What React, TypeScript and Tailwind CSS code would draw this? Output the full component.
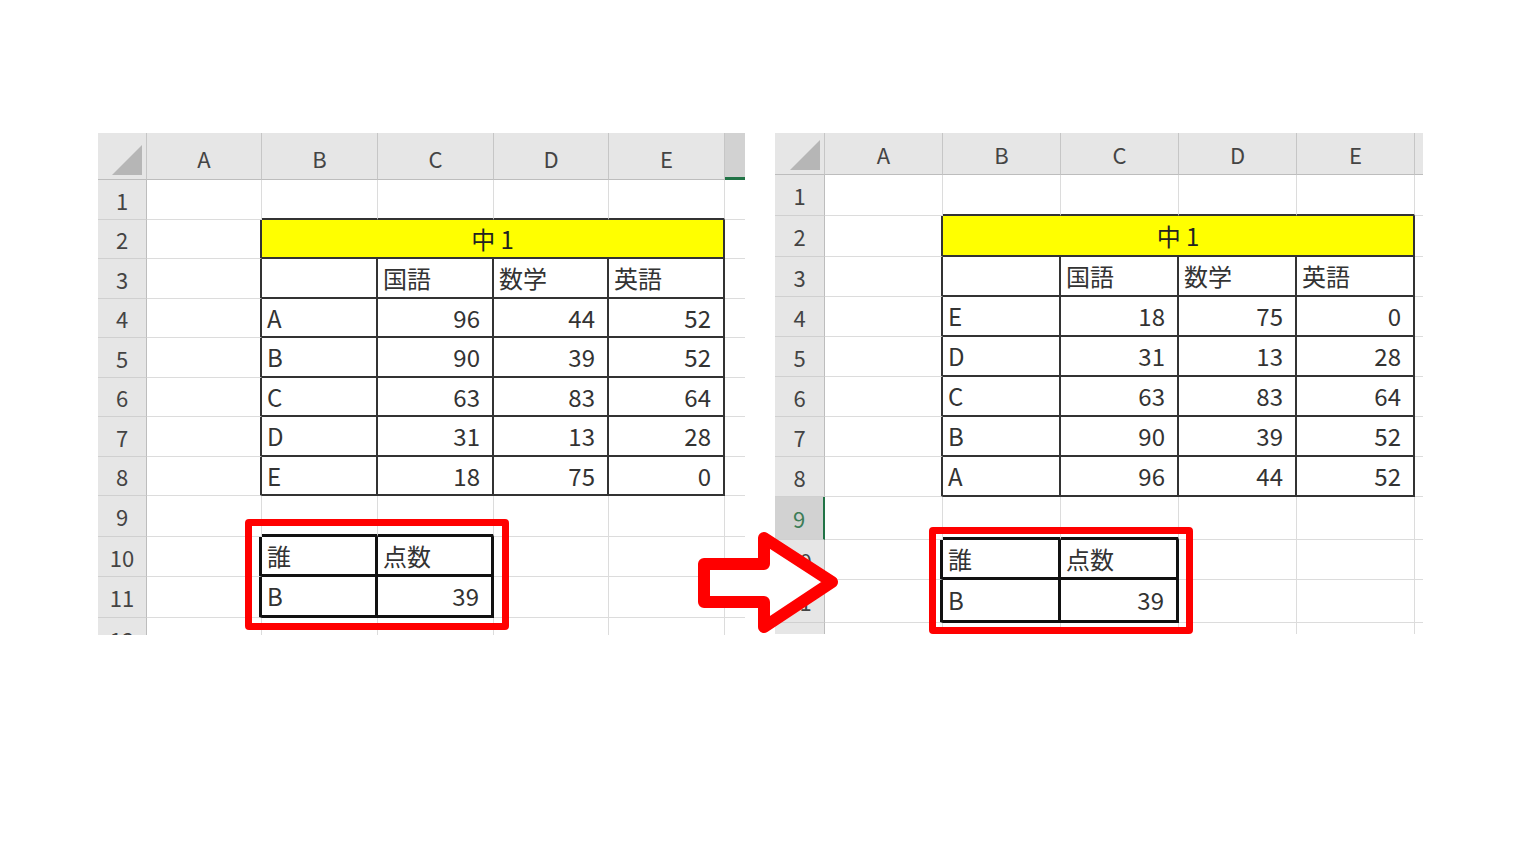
type ScoreRow = [string, number, number, number];

const COLS = ["A", "B", "C", "D", "E"];

const inMain = (r: number, c: number) => r >= 2 && r <= 8 && c >= 2 && c <= 5;
const inSmall = (r: number, c: number) => r >= 10 && r <= 11 && c >= 2 && c <= 3;

// each cell paints its own right/bottom edge, the way excel's grid does
function rightEdge(r: number, c: number): string {
  if ((inSmall(r, c) && c === 3) || inSmall(r, c + 1)) return "border-r-[3px] border-r-[#111]";
  if (inSmall(r, c)) return "border-r-2 border-r-[#333]";
  if (inMain(r, c) || inMain(r, c + 1)) return "border-r-2 border-r-[#333]";
  if (c === 6) return "";
  return "border-r border-r-[#dcdcdc]";
}

function bottomEdge(r: number, c: number): string {
  if ((inSmall(r, c) && r === 11) || inSmall(r + 1, c)) return "border-b-[3px] border-b-[#111]";
  if (inSmall(r, c)) return "border-b-2 border-b-[#333]";
  if (inMain(r, c) || inMain(r + 1, c)) return "border-b-2 border-b-[#333]";
  if (r === 12) return "";
  return "border-b border-b-[#dcdcdc]";
}

function cellText(r: number, c: number, scores: ScoreRow[]): { text: string; num: boolean } {
  if (r === 3) return { text: ["", "", "", "国語", "数学", "英語"][c] ?? "", num: false };
  if (r >= 4 && r <= 8 && c >= 2 && c <= 5) {
    const row = scores[r - 4];
    return c === 2 ? { text: row[0], num: false } : { text: String(row[c - 2]), num: true };
  }
  if (r === 10 && c === 2) return { text: "誰", num: false };
  if (r === 10 && c === 3) return { text: "点数", num: false };
  if (r === 11 && c === 2) return { text: "B", num: false };
  if (r === 11 && c === 3) return { text: "39", num: true };
  return { text: "", num: false };
}

function Sheet({
  gridClass,
  headPad,
  scores,
  selRow,
  selColF,
}: {
  gridClass: string;
  headPad: string;
  scores: ScoreRow[];
  selRow?: number;
  selColF?: boolean;
}) {
  const rows = Array.from({ length: 12 }, (_, i) => i + 1);

  return (
    <div className={`${gridClass} bg-white overflow-hidden leading-none text-[#333]`}>
      {/* column headers */}
      <div className="flex items-end justify-end pr-[4px] pb-[4px] bg-[#e6e6e6] border-r border-r-[#c6c6c6] border-b border-b-[#bdbdbd]">
        <svg width="30" height="30" viewBox="0 0 30 30">
          <path d="M30 0 L30 30 L0 30 Z" fill="#b6b6b6" />
        </svg>
      </div>
      {COLS.map((l) => (
        <div
          key={l}
          className={`flex items-center justify-center ${headPad} text-[22px] bg-[#e6e6e6] text-[#444] border-r border-r-[#c6c6c6] border-b border-b-[#bdbdbd]`}
        >
          {l}
        </div>
      ))}
      <div
        className={
          selColF
            ? "bg-[#d2d2d2] border-b-[3px] border-b-[#217346]"
            : "bg-[#e6e6e6] border-b border-b-[#bdbdbd]"
        }
      />

      {rows.map((r) => {
        const sel = r === selRow;
        const cells = [];
        cells.push(
          <div
            key={`h${r}`}
            className={`flex justify-center overflow-hidden text-[22px] ${r === 12 ? "items-start pt-[10px]" : "items-center"} ${
              sel
                ? "bg-[#d2d2d2] text-[#3d7d57] border-r-2 border-r-[#217346]"
                : "bg-[#e6e6e6] text-[#444] border-r border-r-[#bdbdbd]"
            } ${r === 12 ? "" : "border-b border-b-[#d0d0d0]"}`}
          >
            {r}
          </div>
        );
        for (let c = 1; c <= 6; c++) {
          if (r === 2 && c === 2) {
            cells.push(
              <div
                key={`${r}-${c}`}
                className={`col-span-4 flex items-center justify-center text-[24px] bg-[#ffff00] text-[#222] ${rightEdge(r, 5)} ${bottomEdge(r, 5)}`}
              >
                中 1
              </div>
            );
            continue;
          }
          if (r === 2 && c >= 3 && c <= 5) continue;
          const { text, num } = cellText(r, c, scores);
          cells.push(
            <div
              key={`${r}-${c}`}
              className={`flex items-center text-[24px] ${num ? "justify-end pr-[12px]" : "justify-start pl-[5px]"} ${rightEdge(r, c)} ${bottomEdge(r, c)}`}
            >
              {text}
            </div>
          );
        }
        return cells;
      })}
    </div>
  );
}

const before: ScoreRow[] = [
  ["A", 96, 44, 52],
  ["B", 90, 39, 52],
  ["C", 63, 83, 64],
  ["D", 31, 13, 28],
  ["E", 18, 75, 0],
];

const after: ScoreRow[] = [
  ["E", 18, 75, 0],
  ["D", 31, 13, 28],
  ["C", 63, 83, 64],
  ["B", 90, 39, 52],
  ["A", 96, 44, 52],
];

export default function App() {
  return (
    <div className="relative w-[1536px] h-[864px] bg-white overflow-hidden font-['Noto_Sans_CJK_JP',sans-serif]">
      <div className="flex items-start gap-[30px] pt-[133px] pl-[98px]">
        <Sheet
          gridClass="grid grid-cols-[49px_115px_116px_116px_115px_116px_20px] grid-rows-[47px_40px_39px_40px_39px_40px_39px_40px_39px_41px_40px_41px_17px] w-[647px] h-[502px]"
          headPad="pt-[4px]"
          scores={before}
          selColF
        />
        <Sheet
          gridClass="grid grid-cols-[50px_118px_118px_118px_118px_118px_8px] grid-rows-[42px_41px_41px_40px_40px_40px_40px_40px_40px_43px_40px_43px_11px] w-[648px] h-[501px]"
          headPad=""
          scores={after}
          selRow={9}
        />
      </div>

      {/* red call-out frames */}
      <div className="absolute left-[245px] top-[519px] w-[264px] h-[111px] border-[7px] border-[#ff0000] rounded-[4px]" />
      <div className="absolute left-[929px] top-[527px] w-[264px] h-[107px] border-[7px] border-[#ff0000] rounded-[4px]" />

      {/* arrow */}
      <svg className="absolute left-[690px] top-[525px]" width="160" height="120" viewBox="0 0 160 120">
        <path
          d="M14 39 L74 39 L74 13 L142 57 L74 102 L74 77 L14 77 Z"
          fill="#fff"
          stroke="#ff0000"
          strokeWidth="12"
          strokeLinejoin="round"
        />
      </svg>
    </div>
  );
}
